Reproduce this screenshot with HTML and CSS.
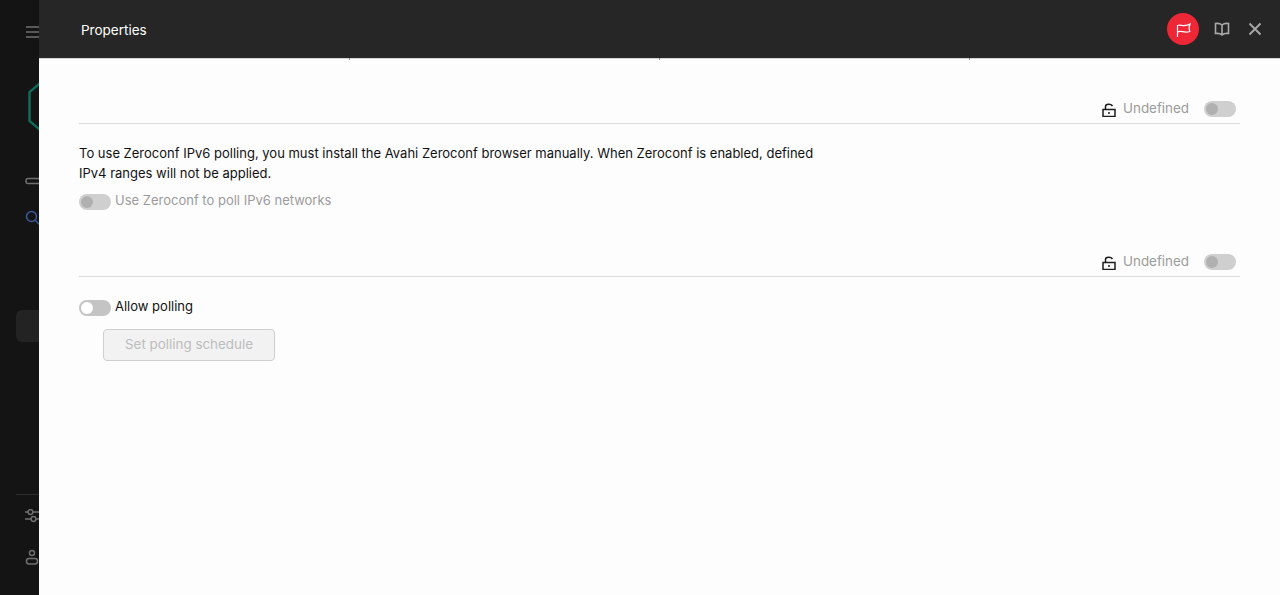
FILE: index.html
```html
<!DOCTYPE html>
<html lang="en">
<head>
<meta charset="utf-8">
<title>Properties</title>
<link rel="stylesheet" href="styles.css">
</head>
<body>
<div class="app">
  <nav class="rail">
    <svg class="rail-icon menu" width="16" height="14" viewBox="0 0 16 14"><path d="M1 2h14M1 7h14M1 12h14"/></svg>
    <svg class="logo" width="30" height="60" viewBox="0 0 30 60"><path d="M21 -2L1.5 14V43L21 59"/></svg>
    <svg class="rail-icon pill" width="16" height="8" viewBox="0 0 16 8"><rect x="1" y="1.5" width="14" height="5" rx="2"/></svg>
    <svg class="rail-icon search" width="16" height="16" viewBox="0 0 16 16"><circle cx="6.5" cy="6.5" r="5"/><path d="M10 10l5 5"/></svg>
    <div class="rail-active"></div>
    <div class="rail-rule"></div>
    <svg class="rail-icon sliders" width="16" height="14" viewBox="0 0 16 14"><path d="M0 3h3M8 3h8M0 10h6M11 10h5"/><circle cx="5.5" cy="3" r="2.4"/><circle cx="8.5" cy="10" r="2.4"/></svg>
    <svg class="rail-icon user" width="14" height="16" viewBox="0 0 14 16"><circle cx="7" cy="4" r="2.5"/><rect x="1.5" y="9.5" width="11" height="5.5" rx="2.5"/></svg>
  </nav>
  <main class="drawer">
    <header class="bar">
      <h1 class="title">Properties</h1>
      <div class="bar-actions">
        <button class="flag-btn" aria-label="Flag">
          <svg width="16" height="16" viewBox="0 0 16 16"><path d="M2.5 16V4.5C6 3 9 6.5 15 3L14 7l.8 3.5C9 12.5 6 9 2.5 11"/></svg>
        </button>
        <svg class="book" width="16" height="14" viewBox="0 0 16 14"><path d="M8 3C6.5 1.6 4 1.2 1.5 1.5V11.5C4 11.2 6.5 11.6 8 13C9.5 11.6 12 11.2 14.5 11.5V1.5C12 1.2 9.5 1.6 8 3ZM8 3V13"/></svg>
        <svg class="close" width="14" height="14" viewBox="0 0 14 14"><path d="M1.5 1.5l11 11M12.5 1.5l-11 11"/></svg>
      </div>
    </header>
    <div class="ticks"><i></i><i></i><i></i></div>
    <div class="content">
      <section class="section">
        <div class="section-head">
          <svg class="lock" width="14" height="14" viewBox="0 0 14 14"><path d="M3.5 6V3.5C3.5 .5 9 .5 10.5 3"/><rect x="1" y="6.5" width="12" height="7"/><path d="M6 10h2"/></svg>
          <span class="undefined">Undefined</span>
          <span class="toggle off-muted"></span>
        </div>
        <p class="note">To use Zeroconf IPv6 polling, you must install the Avahi Zeroconf browser manually. When Zeroconf is enabled, defined IPv4 ranges will not be applied.</p>
        <div class="option muted">
          <span class="toggle off-muted"></span>
          <span>Use Zeroconf to poll IPv6 networks</span>
        </div>
      </section>
      <section class="section second">
        <div class="section-head">
          <svg class="lock" width="14" height="14" viewBox="0 0 14 14"><path d="M3.5 6V3.5C3.5 .5 9 .5 10.5 3"/><rect x="1" y="6.5" width="12" height="7"/><path d="M6 10h2"/></svg>
          <span class="undefined">Undefined</span>
          <span class="toggle off-muted"></span>
        </div>
        <div class="option active">
          <span class="toggle off"></span>
          <span>Allow polling</span>
        </div>
        <button class="schedule" disabled>Set polling schedule</button>
      </section>
    </div>
  </main>
</div>
</body>
</html>
```
FILE: styles.css
```css
* { box-sizing: border-box; }
html, body { margin: 0; height: 100%; overflow: hidden; }
body { font-family: Inter, "Noto Sans", sans-serif; font-size: 13px; line-height: 20px; color: #111; background: #fff; }
.app { display: flex; height: 595px; }

.rail { width: 39px; flex: none; background: #141414; overflow: hidden; display: flex; flex-direction: column; align-items: flex-start; }
.rail svg { flex: none; fill: none; }
.rail-icon { stroke: #6f6f6f; stroke-width: 1.5; }
.menu { margin: 25px 0 0 25px; }
.logo { margin: 39px 0 0 28px; stroke: #0e6b5c; stroke-width: 2.5; }
.pill { margin: 39px 0 0 25px; }
.search { margin: 25px 0 0 25px; stroke: #3b5a9a; }
.rail-active { width: 40px; height: 32px; flex: none; margin: 84px 0 0 16px; background: #232323; border-radius: 6px; }
.rail-rule { width: 40px; height: 1px; flex: none; margin: 152px 0 0 16px; background: #2e2e2e; }
.sliders { margin: 14px 0 0 25px; }
.user { margin: 26px 0 0 25px; }

.drawer { flex: 1; min-width: 0; display: flex; flex-direction: column; background: #fff; }
.bar { height: 58px; flex: none; background: #262626; display: flex; align-items: center; justify-content: space-between; padding: 2px 18px 0 42px; }
.title { margin: 0; font-size: 13.5px; font-weight: 400; color: #fff; }
.bar-actions { display: flex; align-items: center; margin-top: -2px; }
.flag-btn { width: 32px; height: 32px; padding: 0; border: 0; border-radius: 50%; background: #ee2737; display: flex; align-items: center; justify-content: center; margin-right: 15px; }
.flag-btn svg { fill: none; stroke: #fff; stroke-width: 1.2; }
.book { fill: none; stroke: #a8a8a8; stroke-width: 1.6; margin-right: 18px; }
.close { fill: none; stroke: #a8a8a8; stroke-width: 1.9; }

.ticks { height: 2px; flex: none; border-top: 1px solid #d4d4d4; display: flex; padding-left: 310px; gap: 309px; }
.ticks i { width: 1px; height: 2px; margin-top: -1px; background: #8a8a8a; }

.content { flex: 1; padding: 0 40px; background: #fdfdfd; }
.section { display: flex; flex-direction: column; align-items: flex-start; padding-top: 35px; }
.section.second { padding-top: 38px; }
.section-head { align-self: stretch; height: 29px; display: flex; align-items: flex-start; justify-content: flex-end; border-bottom: 1px solid #dcdcdc; padding: 3px 4px 0 0; }
.lock { fill: none; stroke: #1d1d1b; stroke-width: 1.5; margin: 5px 7px 0 0; }
.undefined { font-size: 13.4px; color: #9b9b9b; margin-right: 15px; }
.toggle { width: 32px; height: 16px; border-radius: 8px; background: #cfcfcf; position: relative; flex: none; display: inline-block; }
.toggle::after { content: ""; position: absolute; left: 2px; top: 2px; width: 12px; height: 12px; border-radius: 50%; background: #b0b0b0; }
.toggle.off { background: #c4c4c4; }
.toggle.off::after { background: #fff; }
.section-head .toggle { margin-top: 3px; }
.note { margin: 19px 0 0; max-width: 745px; }
.option { display: flex; align-items: center; gap: 4px; height: 20px; margin-top: 7px; }
.option .toggle { margin-top: 4px; }
.option.muted { color: #9b9b9b; }
.option.active { margin-top: 19px; }
.schedule { width: 172px; height: 32px; margin: 13px 0 0 24px; padding: 0 0 2px; font: inherit; font-size: 13.4px; color: #bdbdbd; background: #f2f2f2; border: 1px solid #cfcfcf; border-radius: 4px; }
```
